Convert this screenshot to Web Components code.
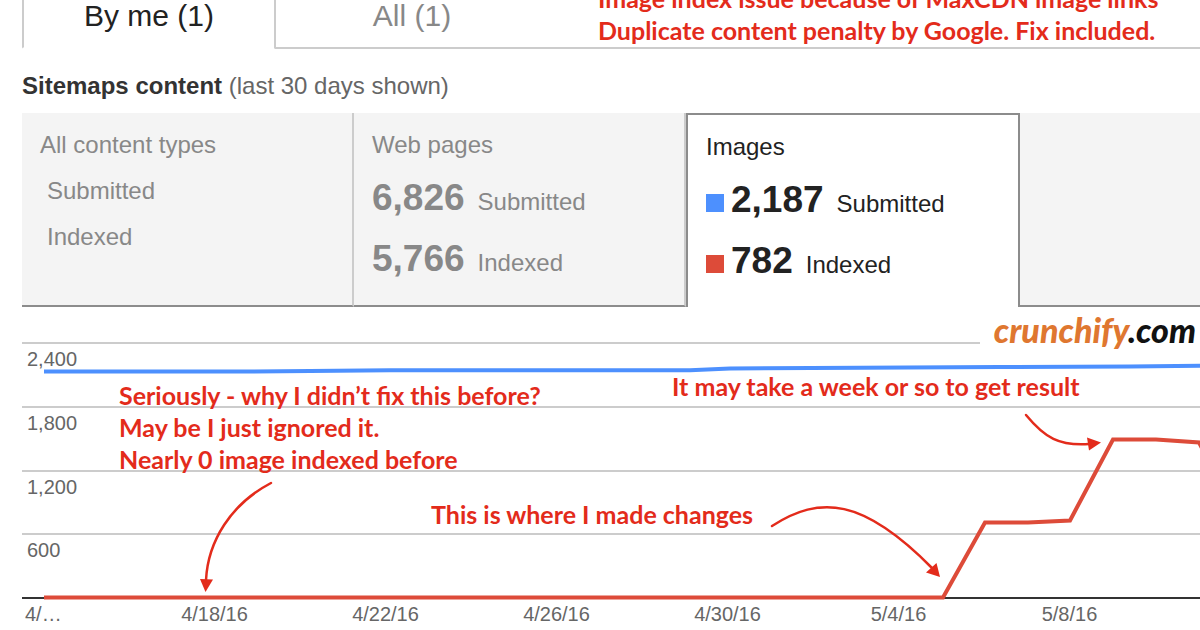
<!DOCTYPE html>
<html lang="en">
<head>
<meta charset="utf-8">
<title>Sitemaps content</title>
<style>
  body {
    margin: 0;
    background: #fff;
    font-family: "Liberation Sans", Arial, sans-serif;
    overflow-x: hidden;
  }
</style>
</head>
<body>
<sitemap-report>
  <tab-bar slot="tabs">
    <tab-item active>By me (1)</tab-item>
    <tab-item>All (1)</tab-item>
    <red-note slot="note">Image index issue because of MaxCDN image links<br>Duplicate content penalty by Google. Fix included.</red-note>
  </tab-bar>
  <span slot="title">Sitemaps content</span>
  <span slot="period">(last 30 days shown)</span>
  <content-card slot="cards" name="All content types">
    <count-row>Submitted</count-row>
    <count-row>Indexed</count-row>
  </content-card>
  <content-card slot="cards" name="Web pages">
    <count-row value="6,826">Submitted</count-row>
    <count-row value="5,766">Indexed</count-row>
  </content-card>
  <content-card slot="cards" name="Images" active>
    <count-row value="2,187" color="#4d90fe">Submitted</count-row>
    <count-row value="782" color="#dd4b39">Indexed</count-row>
  </content-card>
  <index-chart slot="chart">
    <red-note x="97" y="37">Seriously - why I didn’t fix this before?<br>May be I just ignored it.<br>Nearly 0 image indexed before</red-note>
    <red-note x="650" y="28">It may take a week or so to get result</red-note>
    <red-note x="409" y="156">This is where I made changes</red-note>
    <site-logo></site-logo>
  </index-chart>
</sitemap-report>

<script>
// small base class: puts the class's markup in an open shadow root
class BaseElement extends HTMLElement {
    connectedCallback() {
        if (!this.shadowRoot) {
            this.attachShadow({mode: 'open'});
            this.shadowRoot.innerHTML = this.template();
        }
    }
}

class SitemapReport extends BaseElement {
    template() {
        return `
  <style>
    :host {
        display: block;
        padding-left: 22px;
    }
    h2 {
        color: #666;
        font-size: 24px;
        font-weight: normal;
        line-height: 28px;
        margin: 23px 0 13px;
    }
    ::slotted([slot="title"]) {
        color: #333;
        font-weight: bold;
    }
    .cards {
        background: linear-gradient(#8c8c8c, #8c8c8c) left bottom / 100% 2px no-repeat #f4f4f4;
        display: grid;
        grid-template-columns: 332fr 332fr 334fr 180fr;
    }
  </style>
  <slot name="tabs"></slot>
  <h2><slot name="title"></slot> <slot name="period"></slot></h2>
  <div class="cards"><slot name="cards"></slot></div>
  <slot name="chart"></slot>`;
    }
}

class TabBar extends BaseElement {
    template() {
        return `
  <style>
    :host {
        align-items: flex-end;
        display: flex;
        height: 49px;
        overflow: hidden;
    }
    .rest {
        border-bottom: 2px solid #ccc;
        box-sizing: border-box;
        display: flex;
        flex: 1;
        height: 67px;
        padding-left: 50px;
    }
  </style>
  <slot></slot>
  <div class="rest"><slot name="note"></slot></div>`;
    }
}

class TabItem extends BaseElement {
    template() {
        return `
  <style>
    :host {
        display: block;
        flex: 0 0 274px;
    }
    :host([active]) {
        flex-basis: 252px;
    }
    button {
        background: none;
        border: solid #ccc;
        border-width: 0 0 2px 2px;
        border-bottom-left-radius: 2px;
        color: #888;
        cursor: pointer;
        display: block;
        font: 30px/34px "Liberation Sans", Arial, sans-serif;
        height: 64px;
        padding: 0;
        width: 100%;
    }
    :host([active]) button {
        border-bottom-color: transparent;
        color: #222;
    }
  </style>
  <button type="button"><slot></slot></button>`;
    }
}

class ContentCard extends BaseElement {
    template() {
        return `
  <style>
    :host {
        display: block;
    }
    button {
        background: none;
        border: 0;
        border-right: 2px solid #ccc;
        border-bottom: 2px solid #8c8c8c;
        box-sizing: border-box;
        color: #888;
        cursor: pointer;
        display: flex;
        flex-direction: column;
        font: 24px/28px "Liberation Sans", Arial, sans-serif;
        height: 194px;
        justify-content: flex-start;
        padding: 18px;
        text-align: left;
        width: 100%;
    }
    :host([active]) button {
        background: #fff;
        border: 2px solid #8c8c8c;
        border-bottom: 0;
        color: #222;
    }
    .name {
        margin-bottom: 8px;
    }
  </style>
  <button type="button">
    <span class="name">${this.getAttribute('name')}</span>
    <slot></slot>
  </button>`;
    }
}

class CountRow extends BaseElement {
    template() {
        const value = this.getAttribute('value');
        const color = this.getAttribute('color');
        return `
  <style>
    :host {
        align-items: baseline;
        display: flex;
        height: 61px;
        line-height: 61px;
    }
    :host(:not([value])) {
        height: 46px;
        line-height: 48px;
        padding-left: 7px;
    }
    .swatch {
        background: ${color};
        height: 18px;
        margin-right: 7px;
        width: 18px;
    }
    b {
        font-size: 37px;
        margin-right: 13px;
    }
  </style>
  ${color ? '<span class="swatch"></span>' : ''}
  ${value ? `<b>${value}</b>` : ''}
  <slot></slot>`;
    }
}

class RedNote extends BaseElement {
    template() {
        const x = this.getAttribute('x');
        // notes with x/y are pinned over the chart
        const pin = x ? `left: ${x / 1178 * 100}%; position: absolute; top: ${this.getAttribute('y')}px;` : '';
        return `
  <style>
    :host {
        color: #e32b1b;
        display: block;
        font: bold 25px/32px Lato, "Open Sans", sans-serif;
        white-space: nowrap;
        ${pin}
    }
  </style>
  <slot></slot>`;
    }
}

class SiteLogo extends BaseElement {
    template() {
        return `
  <style>
    :host {
        background: #fff;
        position: absolute;
        right: 0;
        top: -34px;
    }
    a {
        color: #111;
        display: block;
        font: italic 900 34px/44px Lato, sans-serif;
        padding: 0 4px 0 14px;
        text-decoration: none;
    }
    span {
        color: #df7730;
    }
  </style>
  <a href="#"><span>crunchify</span>.com</a>`;
    }
}

class IndexChart extends BaseElement {
    template() {
        const rows = ['2,400', '1,800', '1,200', '600'];
        const dates = ['4/…', '4/18/16', '4/22/16', '4/26/16', '4/30/16', '5/4/16', '5/8/16'];
        return `
  <style>
    :host {
        color: #666;
        display: block;
        font-size: 20px;
        line-height: 24px;
        margin-top: 35px;
        position: relative;
    }
    .plot {
        border-bottom: 2px solid #333;
        display: grid;
        grid-template-rows: repeat(4, 1fr);
        height: 255px;
    }
    .plot div {
        border-top: 2px solid #ccc;
        padding: 3px 5px;
    }
    svg {
        height: 255px;
        left: 0;
        overflow: visible;
        position: absolute;
        top: 0;
        width: 100%;
    }
    .line {
        fill: none;
        stroke-width: 4;
    }
    .arrow {
        fill: none;
        stroke: #e32b1b;
        stroke-linecap: round;
        stroke-width: 2.5;
    }
    .head {
        fill: #e32b1b;
    }
    .dates {
        display: grid;
        grid-template-columns: 107fr repeat(6, 171fr) 45fr;
        padding-top: 3px;
        text-align: center;
    }
    .dates :first-child {
        padding-left: 3px;
        text-align: left;
    }
  </style>
  <div class="plot">${rows.map(r => `<div>${r}</div>`).join('')}</div>
  <div class="dates">${dates.map(d => `<span>${d}</span>`).join('')}</div>
  <svg viewBox="22 342 1178 255" preserveAspectRatio="none">
    <path class="line" stroke="#4d90fe" d="M44 371.5H250L310 371L390 370.2H690L730 368.4L860 367.7L1000 367L1130 366.4L1200 365.8"/>
    <path class="line" stroke="#dd4b39" d="M44 597.5H943L985 522.5H1028L1070 520.5L1113 439.5H1156L1199 442.5L1203 450"/>
    <path class="arrow" d="M271 483C231 504 208 541 206 580"/>
    <path class="head" d="M200 579L213 579.5L205.5 592Z"/>
    <path class="arrow" d="M772 526C820 495 863 498 932 568"/>
    <path class="head" d="M940 577L926 572.5L936.5 563Z"/>
    <path class="arrow" d="M1026 415C1045 438 1059 446 1089 444"/>
    <path class="head" d="M1101 442.5L1087 437.5L1089 450.5Z"/>
  </svg>
  <slot></slot>`;
    }
}

customElements.define('sitemap-report', SitemapReport);
customElements.define('tab-bar', TabBar);
customElements.define('tab-item', TabItem);
customElements.define('content-card', ContentCard);
customElements.define('count-row', CountRow);
customElements.define('red-note', RedNote);
customElements.define('site-logo', SiteLogo);
customElements.define('index-chart', IndexChart);
</script>
</body>
</html>
